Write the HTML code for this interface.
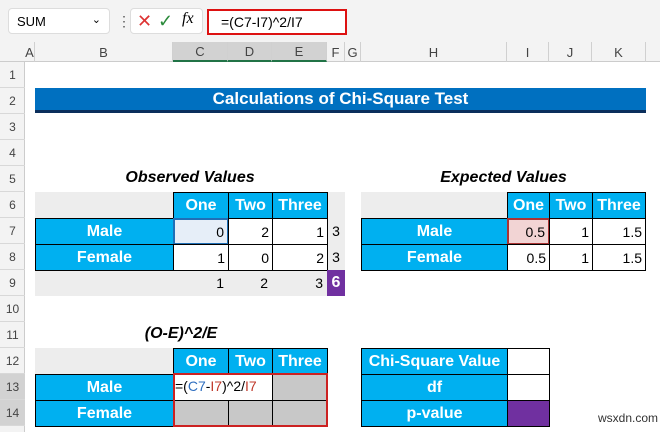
<!DOCTYPE html>
<html><head><meta charset="utf-8"><style>
*{margin:0;padding:0;box-sizing:border-box}
body{width:660px;height:432px;overflow:hidden;background:#fff;font-family:"Liberation Sans",sans-serif;position:relative}
.a{position:absolute}
.c{position:absolute;display:flex;align-items:center;justify-content:center;font-size:14px}
.bl{background:#00B0F0;color:#fff;font-weight:bold;font-size:16px;border:1px solid #000}
.w{background:#fff;border:1px solid #000;justify-content:flex-end;padding-right:3px;font-size:14px}
.g{background:#ededed}
.rn{position:absolute;left:0;width:25px;height:26px;font-size:12px;color:#444;display:flex;align-items:center;justify-content:center;border-bottom:1px solid #d8d8d8}
.ch{position:absolute;top:42px;height:20px;font-size:13px;color:#444;display:flex;align-items:center;justify-content:center;border-right:1px solid #d0d0d0}
.t{position:absolute;font-weight:bold;font-style:italic;font-size:16px;text-align:center}
</style></head><body>
<div class="a" style="left:0;top:0;width:660px;height:42px;background:#f3f3f3"></div>
<div class="a" style="left:8px;top:8px;width:102px;height:26px;background:#fff;border:1px solid #ddd;border-radius:4px;font-size:13px;padding:5px 8px">SUM<span style="position:absolute;right:8px;top:4px;font-size:11px">&#8964;</span></div>
<div class="a" style="left:117px;top:13px;font-size:14px;color:#555">&#8942;</div>
<div class="a" style="left:130px;top:8px;width:73px;height:26px;background:#fff;border:1px solid #ddd;border-radius:4px"></div>
<div class="a" style="left:137px;top:11px;font-size:18px;color:#d33">&#10005;</div>
<div class="a" style="left:158px;top:11px;font-size:18px;color:#2a8a3a">&#10003;</div>
<div class="a" style="left:182px;top:10px;font-size:16px;font-style:italic;font-family:'Liberation Serif',serif">fx</div>
<div class="a" style="left:207px;top:9px;width:140px;height:26px;background:#fff;border:2px solid #d11;font-size:14px;padding:3px 12px">=(C7-I7)^2/I7</div>
<div class="a" style="left:0;top:42px;width:660px;height:20px;background:#f3f3f3;border-bottom:1px solid #ccc"></div>
<div class="a" style="left:0;top:62px;width:25px;height:370px;background:#f3f3f3;border-right:1px solid #ccc"></div>
<div class="ch" style="left:25px;width:10px">A</div>
<div class="ch" style="left:35px;width:138px">B</div>
<div class="ch" style="left:173px;width:55px;background:#d2d2d2;border-bottom:2px solid #217346">C</div>
<div class="ch" style="left:228px;width:44px;background:#d2d2d2;border-bottom:2px solid #217346">D</div>
<div class="ch" style="left:272px;width:55px;background:#d2d2d2;border-bottom:2px solid #217346">E</div>
<div class="ch" style="left:327px;width:18px">F</div>
<div class="ch" style="left:345px;width:16px">G</div>
<div class="ch" style="left:361px;width:146px">H</div>
<div class="ch" style="left:507px;width:42px">I</div>
<div class="ch" style="left:549px;width:43px">J</div>
<div class="ch" style="left:592px;width:54px">K</div>
<div class="rn" style="top:62px">1</div><div class="rn" style="top:88px">2</div><div class="rn" style="top:114px">3</div><div class="rn" style="top:140px">4</div><div class="rn" style="top:166px">5</div><div class="rn" style="top:192px">6</div><div class="rn" style="top:218px">7</div><div class="rn" style="top:244px">8</div><div class="rn" style="top:270px">9</div><div class="rn" style="top:296px">10</div><div class="rn" style="top:322px">11</div><div class="rn" style="top:348px">12</div><div class="rn" style="top:374px;background:#d2d2d2">13</div><div class="rn" style="top:400px;background:#d2d2d2">14</div>
<div class="c" style="left:35px;top:88px;width:611px;height:25px;background:#0070C0;border-bottom:3px solid #0b2f5c;color:#fff;font-weight:bold;font-size:17px">Calculations of Chi-Square Test</div>
<div class="t" style="left:35px;top:169px;width:310px">Observed Values</div>
<div class="a g" style="left:35px;top:192px;width:310px;height:104px"></div>
<div class="c bl" style="left:173px;top:192px;width:56px;height:27px">One</div>
<div class="c bl" style="left:228px;top:192px;width:45px;height:27px">Two</div>
<div class="c bl" style="left:272px;top:192px;width:56px;height:27px">Three</div>
<div class="c bl" style="left:35px;top:218px;width:139px;height:27px">Male</div>
<div class="c bl" style="left:35px;top:244px;width:139px;height:27px">Female</div>
<div class="c w" style="left:173px;top:218px;width:56px;height:27px;background:#e6eef8;border:2px solid #1f6fb6">0</div>
<div class="c w" style="left:228px;top:218px;width:45px;height:27px">2</div>
<div class="c w" style="left:272px;top:218px;width:56px;height:27px">1</div>
<div class="c w" style="left:173px;top:244px;width:56px;height:27px">1</div>
<div class="c w" style="left:228px;top:244px;width:45px;height:27px">0</div>
<div class="c w" style="left:272px;top:244px;width:56px;height:27px">2</div>
<div class="c" style="left:327px;top:218px;width:18px;height:26px">3</div>
<div class="c" style="left:327px;top:244px;width:18px;height:26px">3</div>
<div class="c" style="left:173px;top:270px;width:55px;height:26px;justify-content:flex-end;padding-right:4px">1</div>
<div class="c" style="left:228px;top:270px;width:44px;height:26px;justify-content:flex-end;padding-right:4px">2</div>
<div class="c" style="left:272px;top:270px;width:55px;height:26px;justify-content:flex-end;padding-right:4px">3</div>
<div class="c" style="left:327px;top:270px;width:18px;height:26px;background:#7030A0;color:#fff;font-weight:bold;font-size:16px">6</div>
<div class="t" style="left:361px;top:169px;width:285px">Expected Values</div>
<div class="a g" style="left:361px;top:192px;width:146px;height:26px"></div>
<div class="c bl" style="left:507px;top:192px;width:43px;height:27px">One</div>
<div class="c bl" style="left:549px;top:192px;width:44px;height:27px">Two</div>
<div class="c bl" style="left:592px;top:192px;width:54px;height:27px">Three</div>
<div class="c bl" style="left:361px;top:218px;width:147px;height:27px">Male</div>
<div class="c bl" style="left:361px;top:244px;width:147px;height:27px">Female</div>
<div class="c w" style="left:507px;top:218px;width:43px;height:27px;background:#f2d4d4;border:2px solid #a33">0.5</div>
<div class="c w" style="left:549px;top:218px;width:44px;height:27px">1</div>
<div class="c w" style="left:592px;top:218px;width:54px;height:27px">1.5</div>
<div class="c w" style="left:507px;top:244px;width:43px;height:27px">0.5</div>
<div class="c w" style="left:549px;top:244px;width:44px;height:27px">1</div>
<div class="c w" style="left:592px;top:244px;width:54px;height:27px">1.5</div>
<div class="t" style="left:35px;top:325px;width:292px">(O-E)^2/E</div>
<div class="a g" style="left:35px;top:348px;width:138px;height:26px"></div>
<div class="c bl" style="left:173px;top:348px;width:56px;height:27px">One</div>
<div class="c bl" style="left:228px;top:348px;width:45px;height:27px">Two</div>
<div class="c bl" style="left:272px;top:348px;width:56px;height:27px">Three</div>
<div class="c bl" style="left:35px;top:374px;width:139px;height:27px">Male</div>
<div class="c bl" style="left:35px;top:400px;width:139px;height:27px">Female</div>
<div class="a" style="left:173px;top:374px;width:154px;height:52px;background:#c8c8c8"></div>
<div class="a" style="left:228px;top:400px;width:1px;height:26px;background:#000"></div>
<div class="a" style="left:272px;top:374px;width:1px;height:52px;background:#000"></div>
<div class="a" style="left:173px;top:400px;width:154px;height:1px;background:#000"></div>
<div class="a" style="left:173px;top:374px;width:99px;height:26px;background:#fff;font-size:14px;padding:4px 2px">=(<span style="color:#2f6fc0">C7</span>-<span style="color:#c0392b">I7</span>)^2/<span style="color:#c0392b">I7</span></div>
<div class="a" style="left:173px;top:373px;width:155px;height:54px;border:2px solid #c22"></div>
<div class="c bl" style="left:361px;top:348px;width:147px;height:27px">Chi-Square Value</div>
<div class="c bl" style="left:361px;top:374px;width:147px;height:27px">df</div>
<div class="c bl" style="left:361px;top:400px;width:147px;height:27px">p-value</div>
<div class="c w" style="left:507px;top:348px;width:43px;height:27px"></div>
<div class="c w" style="left:507px;top:374px;width:43px;height:27px"></div>
<div class="c w" style="left:507px;top:400px;width:43px;height:27px;background:#7030A0"></div>
<div class="a" style="left:598px;top:411px;font-size:12px;color:#333">wsxdn.com</div>
</body></html>
